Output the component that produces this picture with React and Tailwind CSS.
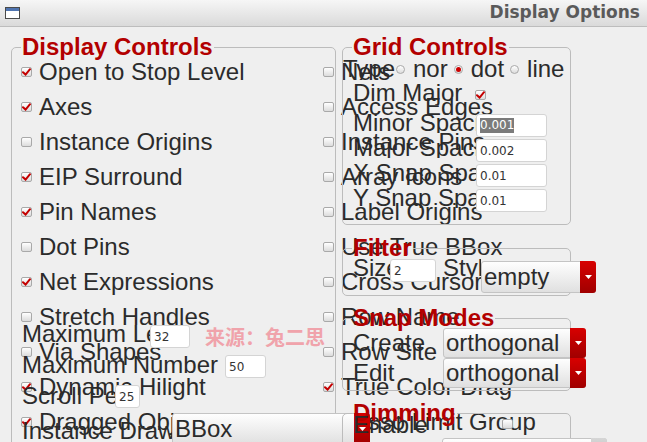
import React from "react";

function Check({ checked }) {
  return (
    <span className="shrink-0 w-[11px] h-[10px] border border-[#a9a9a9] rounded-[2px] bg-linear-to-b from-white to-[#dcdcdc] flex items-center justify-center">
      {checked && (
        <svg width="9" height="8" viewBox="0 0 9 8">
          <path d="M1 4.2 L3.6 6.6 L8 1.2" stroke="#c40000" strokeWidth="2" fill="none" strokeLinecap="round" />
        </svg>
      )}
    </span>
  );
}

function Radio({ checked }) {
  return (
    <span className="shrink-0 w-[9px] h-[9px] rounded-full border border-[#a9a9a9] bg-linear-to-b from-white to-[#dcdcdc] flex items-center justify-center">
      {checked && <span className="w-[5px] h-[5px] rounded-full bg-[#cc0000]" />}
    </span>
  );
}

function Field({ w, value, selected }) {
  return (
    <div className={`shrink-0 mt-[1px] h-[23px] bg-white border border-[#d4d4d4] rounded-[3px] flex items-center pl-[3px] text-[12px] text-[#333] font-['DejaVu_Sans',sans-serif] ${w}`}>
      {selected ? <span className="bg-[#7b7b7b] text-white leading-[15px]">{value}</span> : value}
    </div>
  );
}

function Select({ w, h, value, disabled }) {
  return (
    <div className={`shrink-0 flex border border-[#c4c4c4] rounded-[3px] bg-linear-to-b from-[#fefefe] to-[#e0e0e0] ${w} ${h}`}>
      <span className="flex-1 pl-[2px] text-[24px] leading-none self-center text-[#2b2b2b] whitespace-nowrap overflow-hidden">{value}</span>
      <span
        className={`w-[16px] -my-px -mr-px rounded-r-[3px] flex items-center justify-center ${
          disabled ? "bg-linear-to-b from-[#d6d6d6] to-[#b4b4b4]" : "bg-linear-to-b from-[#d80000] to-[#a00000]"
        }`}
      >
        <svg width="7" height="4" viewBox="0 0 7 4">
          <path d="M0 0h7L3.5 4z" fill="white" />
        </svg>
      </span>
    </div>
  );
}

function Group({ title, className, children }) {
  return (
    <fieldset className={`border border-[#bcbcbc] rounded-[5px] min-w-0 ${className}`}>
      <legend className="ml-[9px] px-[1px] text-[24px] leading-[20px] font-bold text-[#b30000] whitespace-nowrap">{title}</legend>
      {children}
    </fieldset>
  );
}

const left = [
  ["Open to Stop Level", true],
  ["Axes", true],
  ["Instance Origins", false],
  ["EIP Surround", true],
  ["Pin Names", true],
  ["Dot Pins", false],
  ["Net Expressions", true],
  ["Stretch Handles", false],
  ["Via Shapes", false],
  ["Dynamic Hilight", true],
  ["Dragged Object", true],
];
const right = [
  ["Nets", false],
  ["Access Edges", false],
  ["Instance Pins", false],
  ["Array Icons", false],
  ["Label Origins", false],
  ["Use True BBox", false],
  ["Cross Cursor", false],
  ["Row Name", false],
  ["Row Site", false],
  ["True Color Drag", true],
  ["Lasso Limit Group", false],
];

const lbl = "shrink-0 overflow-hidden whitespace-nowrap text-[24px]";

export default function App() {
  const rows = [];
  for (let i = 0; i < left.length; i++) {
    rows.push(left[i], right[i]);
  }
  return (
    <div className="relative w-[647px] h-[442px] overflow-hidden bg-[#efefef] text-[#2b2b2b] font-['Liberation_Sans',Arial,sans-serif]">
      <div className="h-[27px] flex items-center justify-between border-b border-[#bdbdbd] bg-linear-to-b from-[#f6f6f6] to-[#dadada] pl-[5px] pr-[7px]">
        <span className="w-[15px] h-[12px] border border-[#4a4a4a] bg-white flex flex-col">
          <span className="h-[3px] bg-[#4f74b0]" />
        </span>
        <span className="font-['DejaVu_Sans',sans-serif] font-bold text-[17px] text-[#5a5a5a]">Display Options</span>
      </div>

      <div className="pl-[11px] pt-[10px]">
        <Group title="Display Controls" className="w-[325px] h-[420px]">
          <div className="-mt-[3px] pl-[9px] grid grid-cols-[302px_302px]">
            {rows.map(([label, checked], i) => (
              <div key={i} className="h-[35px] flex items-center gap-[7px] whitespace-nowrap">
                <Check checked={checked} />
                <span className="text-[24px] leading-[35px]">{label}</span>
              </div>
            ))}
          </div>
        </Group>
      </div>

      {/* overlapping misc rows */}
      <div className="absolute left-[22px] top-[324px] flex flex-col">
        <div className="h-[30px] flex items-start">
          <span className={`${lbl} w-[128px] leading-[20px]`}>Maximum Length</span>
          <Field w="w-[40px]" value="32" />
        </div>
        <div className="h-[30px] flex items-start">
          <span className={`${lbl} mt-[1px] w-[203px] leading-[20px]`}>Maximum Number</span>
          <Field w="w-[41px]" value="50" />
        </div>
        <div className="h-[29px] flex items-start">
          <span className={`${lbl} mt-[2px] w-[93px] leading-[20px]`}>Scroll Percent</span>
          <Field w="w-[25px]" value="25" />
        </div>
        <div className="h-[30px] flex items-start">
          <span className={`${lbl} mt-[8px] w-[150px] leading-[20px]`}>Instance Drawing</span>
          <Select w="w-[198px]" h="h-[32px]" value="BBox" />
        </div>
      </div>

      {/* right column groups */}
      <div className="absolute left-[342px] top-[37px] w-[229px] flex flex-col">
        <Group title="Grid Controls" className="w-[229px] pb-[11px]">
          <div className="pl-[10px] flex flex-col">
            <div className="-ml-[10px] h-[24px] flex items-center whitespace-nowrap text-[24px] leading-[22px]">
              <span className="shrink-0 w-[53px] overflow-hidden">Type</span>
              <Radio />
              <span className="ml-[8px]">nor</span>
              <span className="ml-[6px]"><Radio checked /></span>
              <span className="ml-[8px]">dot</span>
              <span className="ml-[6px]"><Radio /></span>
              <span className="ml-[8px]">line</span>
            </div>
            <div className="h-[24px] flex items-center">
              <span className={`${lbl} w-[122px] leading-[24px]`}>Dim Major</span>
              <span className="mt-[4px]"><Check checked /></span>
            </div>
            <div className="mt-[8px] h-[25px] flex items-start">
              <span className={`${lbl} w-[123px] leading-[20px]`}>Minor Spacing</span>
              <Field w="w-[71px]" value="0.001" selected />
            </div>
            <div className="h-[25px] flex items-start">
              <span className={`${lbl} w-[123px] leading-[20px]`}>Major Spacing</span>
              <Field w="w-[71px]" value="0.002" />
            </div>
            <div className="h-[25px] flex items-start">
              <span className={`${lbl} w-[123px] leading-[20px]`}>X Snap Spacing</span>
              <Field w="w-[71px]" value="0.01" />
            </div>
            <div className="h-[25px] flex items-start">
              <span className={`${lbl} w-[123px] leading-[20px]`}>Y Snap Spacing</span>
              <Field w="w-[71px]" value="0.01" />
            </div>
          </div>
        </Group>

        <Group title="Filter" className="mt-[13px] w-[229px] pb-[2px]">
          <div className="pl-[10px] h-[35px] flex items-start">
            <span className={`${lbl} w-[37px] leading-[20px]`}>Size</span>
            <Field w="w-[46px]" value="2" />
            <span className={`${lbl} ml-[7px] w-[38px] leading-[20px]`}>Style</span>
            <div className="shrink-0 mt-[3px]">
              <Select w="w-[115px]" h="h-[32px]" value="empty" />
            </div>
          </div>
        </Group>

        <Group title="Snap Modes" className="mt-[12px] w-[229px] pb-[2px]">
          <div className="pl-[10px] flex flex-col">
            <div className="h-[30px] flex items-center">
              <span className={`${lbl} w-[90px] leading-[24px]`}>Create</span>
              <Select w="w-[143px]" h="h-[30px]" value="orthogonal" />
            </div>
            <div className="h-[30px] flex items-center">
              <span className={`${lbl} w-[90px] leading-[24px]`}>Edit</span>
              <Select w="w-[143px]" h="h-[30px]" value="orthogonal" />
            </div>
          </div>
        </Group>

        <Group title="Dimming" className="mt-[12px] w-[229px] h-[60px]">
          <div className="pl-[10px] -mt-[8px] flex flex-col">
            <div className="h-[20px] flex items-start">
              <span className={`${lbl} w-[149px] leading-[20px]`}>Enable</span>
              <span className="shrink-0 mt-[4px]"><Check /></span>
            </div>
            <div className="mt-[3px] h-[30px] flex items-start">
              <span className={`${lbl} mt-[8px] w-[89px] leading-[20px]`}>Level</span>
              <Select w="w-[165px]" h="h-[30px]" value="" disabled />
            </div>
          </div>
        </Group>
      </div>

      <div className="absolute left-[205px] top-[326px] text-[20px] leading-[22px] font-bold text-[#f0a3ab] font-['Noto_Sans_CJK_SC',sans-serif]">
        来源：兔二思
      </div>
    </div>
  );
}
